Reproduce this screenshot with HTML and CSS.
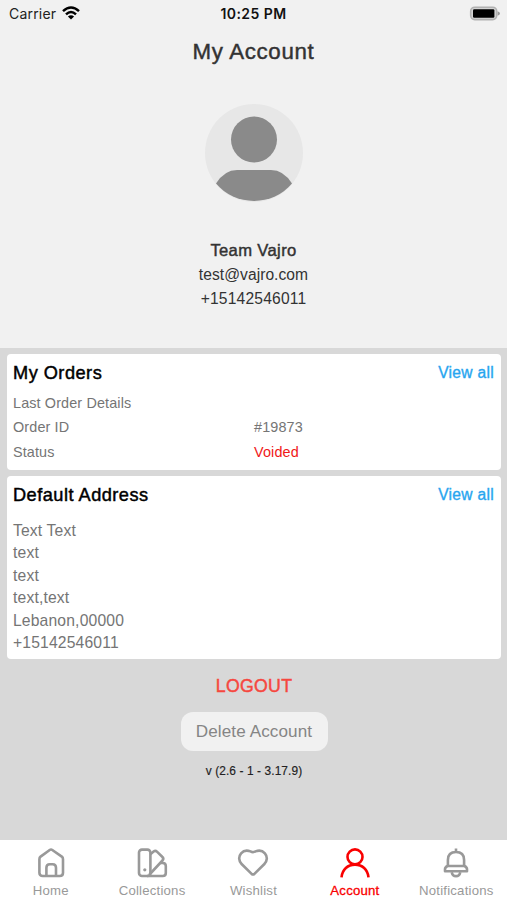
FILE: index.html
```html
<!DOCTYPE html>
<html lang="en">
<head>
<meta charset="utf-8">
<title>My Account</title>
<link rel="stylesheet" href="styles.css">
</head>
<body>
<div class="app">
  <header class="profile">
    <div class="status-bar">
      <div class="carrier">
        <span>Carrier</span>
        <svg class="wifi" viewBox="0 0 18 14" fill="none" stroke="#000" stroke-width="2.5">
          <path d="M1 5.1Q9-2.2 17 5.1M4 8.3Q9 3.7 14 8.3"/>
          <path d="M9 13.6L5.9 10.4Q9 7.9 12.1 10.4Z" fill="#000" stroke="none"/>
        </svg>
      </div>
      <time class="clock">10:25 PM</time>
      <svg class="battery" viewBox="0 0 32 16">
        <rect x="1.7" y="1.2" width="26" height="12.4" rx="4" fill="#d4d4d4" stroke="#b2b2b2" stroke-width="1.6"/>
        <rect x="4" y="3.3" width="21.4" height="8.4" rx="1.2" fill="#000"/>
        <path d="M28.6 5.2Q31 6.1 31 7.5T28.6 9.8Z" fill="#999"/>
      </svg>
    </div>
    <h1 class="title">My Account</h1>
    <svg class="avatar" viewBox="0 0 98 98">
      <circle cx="49" cy="49" r="49" fill="#e7e7e7"/>
      <circle cx="49" cy="35.5" r="23" fill="#8a8a8a"/>
      <path d="M11 79.5Q19.5 66 32 66H66Q78.5 66 87 79.5A50 50 0 0 1 11 79.5Z" fill="#8a8a8a"/>
    </svg>
    <div class="name">Team Vajro</div>
    <div class="contact">test@vajro.com</div>
    <div class="contact phone">+15142546011</div>
  </header>

  <main class="content">
    <section class="card orders">
      <div class="card-head"><h2>My Orders</h2><a class="view-all">View all</a></div>
      <div class="row">Last Order Details</div>
      <div class="row"><span>Order ID</span><span>#19873</span></div>
      <div class="row"><span>Status</span><span class="voided">Voided</span></div>
    </section>
    <section class="card address">
      <div class="card-head"><h2>Default Address</h2><a class="view-all">View all</a></div>
      <div class="address-lines">
        <div>Text Text</div>
        <div>text</div>
        <div>text</div>
        <div>text,text</div>
        <div>Lebanon,00000</div>
        <div>+15142546011</div>
      </div>
    </section>
    <div class="logout">LOGOUT</div>
    <button class="delete">Delete Account</button>
    <div class="version">v (2.6 - 1 - 3.17.9)</div>
  </main>

  <nav class="tabs">
    <a class="tab">
      <svg viewBox="0 0 32 32"><path d="M4.4 12.2Q4.4 10.6 5.6 9.6L14.7 3Q16 2.1 17.3 3L26.8 9.6Q28 10.6 28 12.2V25.7Q28 29 24.7 29H7.7Q4.4 29 4.4 25.7Z"/><path d="M11.4 29V20.8Q11.4 17.2 14.8 17.2H17.6Q21 17.2 21 20.8V29"/></svg>
      <span>Home</span>
    </a>
    <a class="tab">
      <svg viewBox="0 0 32 32"><rect x="3" y="2.6" width="11.4" height="26.4" rx="3"/><path d="M14.4 7.2L17.6 4.6Q19.4 3.2 21.2 4.9L26.2 9.7Q28.2 11.5 26.5 13.5L13.5 27.5"/><path d="M24.3 16H26.7Q29.8 16 29.8 19V26Q29.8 29 26.8 29H11"/><circle class="dot" cx="8.8" cy="22.8" r="1.6"/></svg>
      <span>Collections</span>
    </a>
    <a class="tab">
      <svg viewBox="0 0 32 32"><path d="M14.6 26.9L4.6 17C1.6 14 1.4 9.3 4.1 6.3C6.5 3.6 10.5 3.2 13.5 4.4Q16 5.8 18.5 4.4C21.5 3.2 25.5 3.6 27.9 6.3C30.6 9.3 30.4 14 27.4 17L17.4 26.9Q16 28 14.6 26.9Z"/></svg>
      <span>Wishlist</span>
    </a>
    <a class="tab active">
      <svg viewBox="0 0 32 32"><circle cx="16" cy="9.9" r="7.5"/><path d="M2.5 30.3C3.3 22.4 8.8 17.6 16 17.6S28.7 22.4 29.5 30.3"/></svg>
      <span>Account</span>
    </a>
    <a class="tab">
      <svg viewBox="0 0 32 32"><path d="M16 1.5V5M7.9 19V13Q7.9 5 16 5T24.1 13V19"/><path d="M7.5 19H24.5Q27 20.2 27 22.3V24.2H5V22.3Q5 20.2 7.5 19Z"/><path d="M11.7 25.2Q12.5 29.1 16 29.1T20.3 25.2"/></svg>
      <span>Notifications</span>
    </a>
  </nav>
</div>
</body>
</html>
```
FILE: styles.css
```css
* { box-sizing: border-box; }

body {
  margin: 0;
  font-family: "Liberation Sans", Arial, sans-serif;
  background: #d8d8d8;
}

.app {
  height: 900px;
  display: flex;
  flex-direction: column;
}

.profile {
  height: 348px;
  display: flex;
  flex-direction: column;
  align-items: center;
  background: #f1f1f1;
  color: #333;
}

.status-bar {
  width: 100%;
  height: 28px;
  padding: 0 6px 0 9px;
  display: grid;
  grid-template-columns: 1fr auto 1fr;
  align-items: center;
  font: 14px/28px Inter, sans-serif;
  color: #222;
}

.carrier { display: flex; align-items: center; gap: 6px; letter-spacing: 0.2px; }
.wifi { width: 18px; height: 14px; margin-top: -2px; }
.clock { margin-left: -3px; font-size: 14px; font-weight: 600; letter-spacing: 0.45px; color: #111; }
.battery { width: 32px; height: 16px; margin-top: -1px; justify-self: end; }

.title {
  margin: 9px 0 0;
  font-size: 22.3px;
  font-weight: 400;
  line-height: 30px;
  letter-spacing: 0.65px;
  -webkit-text-stroke: 0.45px;
}

.avatar { width: 98px; height: 98px; margin-top: 36.5px; }

.name {
  margin-top: 37.5px;
  font-size: 16.6px;
  line-height: 24px;
  letter-spacing: 0.35px;
  -webkit-text-stroke: 0.45px;
}

.contact { font-size: 15.6px; line-height: 24px; letter-spacing: 0.05px; }
.phone { letter-spacing: 0.2px; }

.content {
  flex: 1;
  padding: 6px 6px 0 7px;
  display: flex;
  flex-direction: column;
  align-items: center;
}

.card {
  width: 100%;
  padding: 7px 7px 0 6px;
  border-radius: 4px;
  background: #fff;
  color: #757575;
}

.orders { height: 116px; }
.address { height: 183px; margin-top: 6px; }

.card-head {
  height: 24px;
  display: flex;
  align-items: center;
  justify-content: space-between;
}

.card-head h2 {
  margin: 0;
  font-size: 18.2px;
  font-weight: 400;
  letter-spacing: 0.48px;
  color: #000;
  -webkit-text-stroke: 0.45px;
}

.view-all {
  font-size: 15.6px;
  letter-spacing: 0.3px;
  color: #27a5ef;
  -webkit-text-stroke: 0.35px;
}

.row {
  display: grid;
  grid-template-columns: 241px 1fr;
  font-size: 14.4px;
  line-height: 24.4px;
  letter-spacing: 0.13px;
  white-space: nowrap;
}

.orders .card-head { margin-bottom: 6px; }
.voided { color: #f01818; }

.address-lines {
  margin-top: 13px;
  font-size: 15.7px;
  line-height: 22.4px;
  letter-spacing: 0.15px;
}

.logout {
  margin-top: 16px;
  font-size: 17.7px;
  line-height: 22px;
  letter-spacing: 0.3px;
  color: #f6473f;
  -webkit-text-stroke: 0.45px;
}

.delete {
  width: 147px;
  height: 39px;
  margin-top: 15px;
  padding: 0;
  border: 0;
  border-radius: 12px;
  background: #f1f1f1;
  color: #858585;
  font: 17.1px "Liberation Sans", Arial, sans-serif;
  letter-spacing: 0.1px;
}

.version {
  margin-top: 12px;
  font-size: 11.9px;
  line-height: 16px;
  letter-spacing: 0.1px;
  color: #222;
  -webkit-text-stroke: 0.15px;
}

.tabs {
  height: 60px;
  display: grid;
  grid-template-columns: repeat(5, 1fr);
  background: #fff;
}

.tab {
  padding-top: 7px;
  display: flex;
  flex-direction: column;
  align-items: center;
  color: #999;
  font-size: 13.2px;
  line-height: 16px;
  letter-spacing: 0.2px;
}

.tab svg {
  width: 32px;
  height: 32px;
  margin-bottom: 4px;
  fill: none;
  stroke: currentColor;
  stroke-width: 2.6;
  stroke-linejoin: round;
}

.tab .dot { fill: currentColor; stroke: none; }
.tab.active { color: #f90000; }
.tab.active span { -webkit-text-stroke: 0.3px; }
```
